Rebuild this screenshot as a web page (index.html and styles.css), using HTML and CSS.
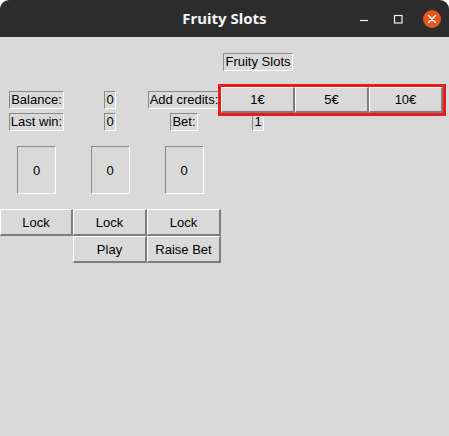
FILE: index.html
```html
<!DOCTYPE html>
<html>
<head>
<meta charset="utf-8">
<link rel="stylesheet" href="styles.css">
</head>
<body>
<div class="window">
  <div class="titlebar">
    <span class="title">Fruity Slots</span>
    <div class="controls">
      <span class="ctl min"><svg width="10" height="10" viewBox="0 0 10 10"><line x1="1" y1="6.5" x2="9" y2="6.5" stroke="#f2f2f2" stroke-width="1.2"/></svg></span>
      <span class="ctl max"><svg width="10" height="10" viewBox="0 0 10 10"><rect x="1.5" y="1.5" width="7.5" height="7.5" fill="none" stroke="#f2f2f2" stroke-width="1.2"/></svg></span>
      <span class="ctl close"><svg width="18" height="18" viewBox="0 0 18 18"><circle cx="9" cy="9" r="9" fill="#e95420"/><path d="M5.5 5.5 L12.5 12.5 M12.5 5.5 L5.5 12.5" stroke="#ffffff" stroke-width="1.5" stroke-linecap="round"/></svg></span>
    </div>
  </div>
  <div class="content">
    <div class="grid">
      <div class="cell c3 r0"><span class="lbl">Fruity Slots</span></div>

      <div class="cell c0 r1"><span class="lbl">Balance:</span></div>
      <div class="cell c1 r1"><span class="lbl">0</span></div>
      <div class="cell c2 r1"><span class="lbl">Add credits:</span></div>
      <button class="btn c3 r1">1€</button>
      <button class="btn c4 r1">5€</button>
      <button class="btn c5 r1">10€</button>

      <div class="cell c0 r2"><span class="lbl">Last win:</span></div>
      <div class="cell c1 r2"><span class="lbl">0</span></div>
      <div class="cell c2 r2"><span class="lbl">Bet:</span></div>
      <div class="cell c3 r2"><span class="lbl">1</span></div>

      <div class="cell c0 r3"><span class="slot">0</span></div>
      <div class="cell c1 r3"><span class="slot">0</span></div>
      <div class="cell c2 r3"><span class="slot">0</span></div>

      <button class="btn c0 r4">Lock</button>
      <button class="btn c1 r4">Lock</button>
      <button class="btn c2 r4">Lock</button>

      <button class="btn c1 r5">Play</button>
      <button class="btn c2 r5">Raise Bet</button>
    </div>
    <div class="highlight"></div>
  </div>
</div>
</body>
</html>
```

FILE: styles.css
```css
html, body {
  margin: 0;
  padding: 0;
  background: #ffffff;
}
.window {
  width: 449px;
  height: 436px;
  display: flex;
  flex-direction: column;
}
.titlebar {
  height: 37px;
  background: #2c2c2c;
  border-radius: 9px 9px 0 0;
  position: relative;
  display: flex;
  align-items: center;
  justify-content: center;
  flex-shrink: 0;
}
.title {
  font-family: "Noto Sans", sans-serif;
  font-weight: bold;
  font-size: 15px;
  color: #f4f4f4;
  margin-left: 0;
  position: relative;
  top: -1px;
}
.controls {
  position: absolute;
  right: 8px;
  top: 10px;
  display: flex;
  align-items: center;
}
.ctl {
  display: flex;
  align-items: center;
  justify-content: center;
}
.min { width: 10px; height: 10px; margin-right: 24px; }
.max { width: 10px; height: 10px; margin-right: 20px; }
.close { width: 18px; height: 18px; }
.content {
  flex: 1;
  background: #d9d9d9;
  position: relative;
  font-family: "Liberation Sans", Arial, sans-serif;
  font-size: 13px;
  color: #000;
}
.grid {
  display: grid;
  grid-template-columns: 73px 74px 74px 74px 74px 74px;
  grid-template-rows: 50px 26px 18px 78px 27px 27px;
}
.cell {
  display: flex;
  align-items: center;
  justify-content: center;
}
.c0 { grid-column: 1; }
.c1 { grid-column: 2; }
.c2 { grid-column: 3; }
.c3 { grid-column: 4; }
.c4 { grid-column: 5; }
.c5 { grid-column: 6; }
.r0 { grid-row: 1; }
.r1 { grid-row: 2; }
.r2 { grid-row: 3; }
.r3 { grid-row: 4; }
.r4 { grid-row: 5; }
.r5 { grid-row: 6; }
.lbl {
  display: inline-block;
  line-height: 16px;
  padding: 0 1px;
  border-style: solid;
  border-width: 1px;
  border-color: #8a8a8a #ffffff #ffffff #8a8a8a;
  white-space: nowrap;
}
.slot {
  box-sizing: border-box;
  width: 39px;
  height: 48px;
  display: flex;
  align-items: center;
  justify-content: center;
  border-style: solid;
  border-width: 1px;
  border-color: #8a8a8a #ffffff #ffffff #8a8a8a;
}
.btn {
  margin: 0;
  padding: 0;
  box-sizing: border-box;
  background: #d9d9d9;
  font-family: "Liberation Sans", Arial, sans-serif;
  font-size: 13px;
  color: #000;
  border-style: solid;
  border-width: 1px 2px 2px 1px;
  border-color: #ffffff #7d7d7d #7d7d7d #ffffff;
  border-radius: 0;
  white-space: nowrap;
}
.highlight {
  position: absolute;
  left: 218px;
  top: 47px;
  width: 228px;
  height: 32px;
  box-sizing: border-box;
  border: 3px solid #ee1b1b;
  pointer-events: none;
}
```
